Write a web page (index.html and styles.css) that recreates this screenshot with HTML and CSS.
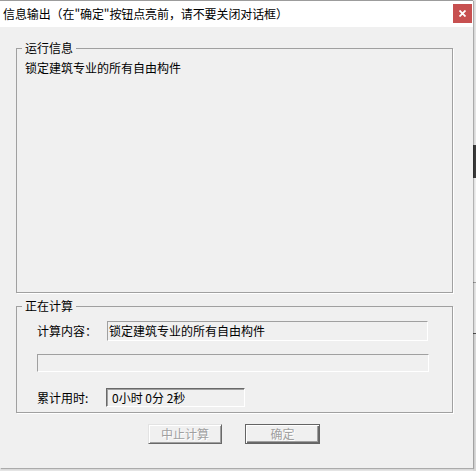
FILE: index.html
```html
<!DOCTYPE html>
<html lang="zh-CN">
<head>
<meta charset="utf-8">
<title>信息输出</title>
<link rel="stylesheet" href="styles.css">
</head>
<body>
<div class="window">
  <div class="titlebar">
    <span class="title">信息输出（在"确定"按钮点亮前，请不要关闭对话框）</span>
    <div class="close"><svg width="7" height="7" viewBox="0 0 7 7"><path d="M0.5 0.5 L6.5 6.5 M6.5 0.5 L0.5 6.5" stroke="#fff" stroke-width="1.8"/></svg></div>
  </div>
  <div class="content">
    <fieldset class="group">
      <legend>运行信息</legend>
      <div class="log">锁定建筑专业的所有自由构件</div>
    </fieldset>
    <fieldset class="group group-calc">
      <legend>正在计算</legend>
      <div class="calc">
        <div class="row">
          <span class="label label-a">计算内容：</span>
          <div class="field field-a">锁定建筑专业的所有自由构件</div>
        </div>
        <div class="progress"></div>
        <div class="row row-time">
          <span class="label label-b">累计用时:</span>
          <div class="field field-b">0小时 0分 2秒</div>
        </div>
      </div>
    </fieldset>
    <div class="buttons">
      <div class="btn btn-stop">中止计算</div>
      <div class="btn btn-ok">确定</div>
    </div>
  </div>
</div>
<div class="backdrop">
  <div class="bd bd1"></div>
  <div class="bd bd2"></div>
  <div class="bd bd3"></div>
  <div class="bd bd4"></div>
  <div class="bd bd5"></div>
  <div class="bd bd6"></div>
  <div class="bd bd7"></div>
</div>
</body>
</html>
```

FILE: styles.css
```css
html, body {
  margin: 0;
  height: 100%;
}
body {
  display: flex;
  align-items: flex-start;
  background: #e4e4e4;
  font-family: "Noto Sans CJK SC", sans-serif;
  font-size: 12px;
  color: #000;
  overflow: hidden;
}
.window {
  width: 473px;
  height: 468px;
  flex: none;
  box-sizing: border-box;
  background: #f0f0f0;
  border-top: 1px solid #9c9c9c;
  box-shadow: 1px 1px 1px rgba(0,0,0,0.25);
  display: flex;
  flex-direction: column;
  position: relative;
  z-index: 1;
}
.titlebar {
  height: 26px;
  flex: none;
  background: #fff;
  display: flex;
  align-items: center;
  padding: 0 1px 0 3px;
}
.title {
  line-height: 14px;
  font-size: 12px;
  letter-spacing: -0.1px;
}
.close {
  margin-left: auto;
  align-self: flex-start;
  margin-top: 3px;
  width: 19px;
  height: 19px;
  background: #c75050;
  display: flex;
  align-items: center;
  justify-content: center;
}
.close svg { display: block; }
.content {
  padding: 14px 0 0 16px;
}
.group {
  margin: 0;
  padding: 0;
  width: 437px;
  box-sizing: border-box;
  border: 1px solid #a0a0a0;
  box-shadow: 1px 1px 0 #fff;
  min-width: 0;
}
.group legend {
  margin-left: 5px;
  padding: 0 3px;
  line-height: 14px;
  height: 14px;
}
.log {
  height: 237px;
  box-sizing: border-box;
  padding: 6px 0 0 8px;
  line-height: 14px;
}
.group-calc {
  margin-top: 6px;
}
.calc {
  padding: 8px 0 5px 20px;
}
.row {
  display: flex;
  align-items: center;
}
.label {
  line-height: 14px;
  flex: none;
}
.label-a { width: 70px; }
.label-b { width: 69px; }
.field {
  box-sizing: border-box;
  border: 1px solid;
  border-color: #a0a0a0 #fff #fff #a0a0a0;
  line-height: 14px;
  display: flex;
  align-items: center;
}
.field-a {
  width: 321px;
  height: 20px;
  padding-left: 1px;
}
.field-b {
  width: 139px;
  height: 19px;
  padding-left: 5px;
  border-color: #696969 #fff #fff #696969;
  box-shadow: inset 1px 1px 0 #a0a0a0;
}
.progress {
  margin-top: 13px;
  width: 392px;
  height: 18px;
  box-sizing: border-box;
  border: 1px solid;
  border-color: #a0a0a0 #fff #fff #a0a0a0;
}
.row-time {
  margin-top: 16px;
}
.buttons {
  display: flex;
  gap: 23px;
  margin: 11px 0 0 132px;
}
.btn {
  height: 20px;
  box-sizing: border-box;
  display: flex;
  align-items: center;
  justify-content: center;
  color: #a0a0a0;
  text-shadow: 1px 1px 0 #fff;
  line-height: 14px;
  background: #f0f0f0;
}
.btn-stop {
  width: 74px;
  border: 1px solid;
  border-color: #e3e3e3 #696969 #696969 #e3e3e3;
  box-shadow: inset 1px 1px 0 #fff, inset -1px -1px 0 #a0a0a0;
}
.btn-ok {
  width: 75px;
  border: 1px solid #646464;
  box-shadow: inset 1px 1px 0 #fff, inset -1px -1px 0 #696969, inset -2px -2px 0 #a0a0a0;
}
.backdrop {
  width: 3px;
  flex: none;
  display: flex;
  flex-direction: column;
}
.bd { width: 3px; }
.bd1 { height: 145px; background: #e3e3e3; }
.bd2 { height: 33px; background: #3c3c3c; }
.bd3 { height: 104px; background: #eeeeee; }
.bd4 { height: 1px; background: #a0a0a0; }
.bd5 { height: 50px; background: #e6e6e6; }
.bd6 { height: 1px; background: #505050; }
.bd7 { height: 137px; background: #d9d9d9; }
```
